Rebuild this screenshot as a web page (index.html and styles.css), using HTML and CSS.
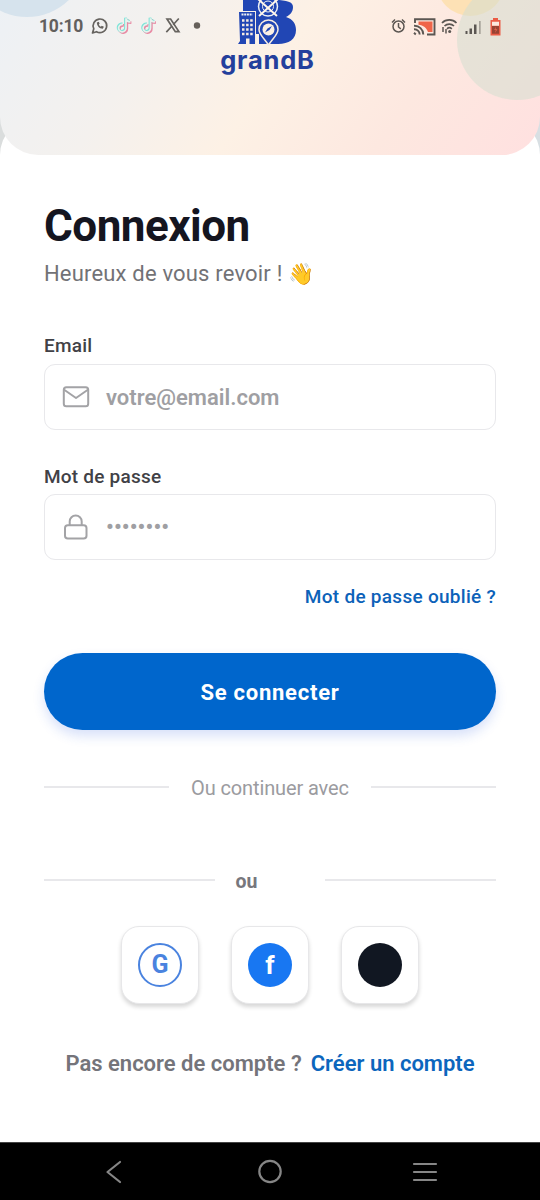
FILE: index.html
```html
<!DOCTYPE html>
<html lang="fr">
<head>
<meta charset="utf-8">
<title>Connexion</title>
<link rel="stylesheet" href="styles.css">
</head>
<body>
<div class="phone">
  <header class="hero">
    <span class="bubble bubble-blue"></span>
    <span class="bubble bubble-yellow"></span>
    <span class="bubble bubble-green"></span>
    <div class="status">
      <span class="clock">10:10</span>
      <svg class="left-icons" width="114" height="20" viewBox="0 0 114 20" fill="none">
        <g stroke="#66635f" stroke-width="1.700">
          <path d="M1.500 17l1.300-4.200A6.800 6.800 0 1 1 5.500 15.700z" stroke-linejoin="round"/>
          <path d="M5.800 6.500c.2 3.700 2.500 6.100 6 6.200l1.100-1.900-2.100-1-1 1c-1-.5-1.700-1.300-2-2.200l.8-.9-.8-2z" fill="#66635f" stroke="none"/>
        </g>
        <g id="note" stroke-width="2.600">
          <path d="M32 8.500a3.700 3.700 0 1 0 3 3.500V2.300c.3 2.200 1.700 3.400 4.500 3.600" stroke="#e98aa4" transform="translate(.9 .9)"/>
          <path d="M32 8.500a3.700 3.700 0 1 0 3 3.500V2.300c.3 2.200 1.700 3.400 4.500 3.600" stroke="#7de4d8" transform="translate(-.6 -.6)"/>
          <path d="M32 8.500a3.700 3.700 0 1 0 3 3.500V2.300c.3 2.200 1.700 3.400 4.500 3.600" stroke="#e9f1ed" stroke-width="1.700"/>
        </g>
        <use href="#note" x="24.500"/>
        <g stroke="#66635f">
          <path d="M76 3h3.600l8.300 12.600h-3.600z" stroke-width="1.700"/>
          <path d="M87.800 2.500l-5.600 6.200M81 10l-5.700 6.200" stroke-width="1.700"/>
        </g>
        <circle cx="106" cy="9.500" r="3.200" fill="#66605a"/>
      </svg>
      <svg class="right-icons" width="114" height="22" viewBox="0 0 114 22" fill="none">
        <g stroke="#5b5652" stroke-width="1.500">
          <circle cx="8.500" cy="11.500" r="5.500"/>
          <path d="M8.500 8v4l2.300 1.800M2 7.500l3-3M15 7.500l-3-3"/>
        </g>
        <path d="M28.500 6.500h14v10.500H38c-1.500-4-4.500-6.500-9.500-7.200z" fill="#ef6549"/>
        <path d="M25 8V4.200h19.500v15.300H37" stroke="#5b5652" stroke-width="1.900"/>
        <path d="M24 10.800a8.700 8.700 0 0 1 9.300 8.700M24 14.300a5.300 5.300 0 0 1 5.700 5.200M24 17.800l1.800 1.700" stroke="#5b5652" stroke-width="1.900"/>
        <g stroke="#5b5652" stroke-width="1.700">
          <path d="M52 8a10.200 10.200 0 0 1 14.500 0M54.500 11a6.700 6.700 0 0 1 9.500 0M57 13.800a3.600 3.600 0 0 1 4.800 0"/>
          <path d="M53 12v5M56 14v4.500" stroke-width="1.500"/>
          <circle cx="59.700" cy="16.500" r="1.500" fill="#5b5652" stroke="none"/>
        </g>
        <g fill="#5b5652">
          <path d="M75.500 16h2v3h-2zM79.500 13.500h2.500V19h-2.500zM84 9.500h2.500V19H84z"/>
          <path d="M89 6h1.700v13H89z" opacity=".45"/>
        </g>
        <path d="M100.500 5h2.500V3h5v2h2.500V20.500h-10z" fill="#eb5b45"/>
        <path d="M102 6.700h7v4h-7z" fill="#fbe7dd"/>
        <path d="M102 11h7v7.700h-7z" fill="#984333"/>
        <path d="M106.100 11.700l-2 3.400h1.700l-.7 3 2.300-3.900h-1.800z" fill="#e9634b"/>
      </svg>
    </div>
    <div class="brand">
      <svg width="60" height="46" viewBox="0 0 60 46" fill="none">
        <path d="M5 0h32c12 0 18 2 18 7 0 5-3 8-7 10 7 2 10 7 10 13 0 9-7 14-18 14H21V34h-3V11H5z" fill="#2146b4"/>
        <path d="M1 12h16v32H0l2-3z" fill="#2146b4"/>
        <path d="M3.500 14.500h11" stroke="#edf0f4" stroke-width="1.800" stroke-dasharray="2 .7"/>
        <path d="M4 20.500h11M4 25h11M4 29.500h11M4 34h11" stroke="#f7ece1" stroke-width="2.300" stroke-dasharray="2.500 1.600"/>
        <path d="M8 38.500h3.500V45H8z" fill="#fbf0e4"/>
        <path d="M17.500 11v32.500" stroke="#f7ece1"/>
        <circle cx="30" cy="6.500" r="9.500" stroke="#edf0f4" stroke-width="1.500"/>
        <circle cx="30" cy="6.500" r="5.500" stroke="#edf0f4"/>
        <path d="M20-1l19 17M40-1L21 16" stroke="#fff6ea" stroke-width="2"/>
        <path d="M30.500 45C26 38 21 34.500 21 29.500a9.500 9.500 0 0 1 19 0C40 34.500 35 38 30.500 45z" fill="#2146b4" stroke="#f7ece1" stroke-width="1.500"/>
        <circle cx="30.500" cy="29.500" r="6" fill="#fbf0e4"/>
        <path d="M27 32.500l2.500-4 4.500-2.500-2.500 4z" fill="#2146b4"/>
      </svg>
      <span class="brand-name">grandB</span>
    </div>
  </header>
  <main class="sheet">
    <h1>Connexion</h1>
    <p class="subtitle">Heureux de vous revoir ! <span class="wave">👋</span></p>
    <label class="label">Email</label>
    <div class="field">
      <svg width="28" height="28" viewBox="0 0 28 28" fill="none" stroke="#a3a3a6" stroke-width="2" stroke-linejoin="round" stroke-linecap="round"><rect x="1.800" y="4.300" width="24.400" height="19" rx="2.500"/><path d="M2.500 7l11.500 8 11.500-8"/></svg>
      <span class="placeholder">votre@email.com</span>
    </div>
    <label class="label label-second">Mot de passe</label>
    <div class="field">
      <svg width="28" height="28" viewBox="0 0 28 28" fill="none" stroke="#a3a3a6" stroke-width="2"><rect x="3" y="12.300" width="21.500" height="13.200" rx="2.800"/><path d="M7.700 12.300V8.500a6 6 0 0 1 12 0v3.800"/></svg>
      <span class="placeholder dots">••••••••</span>
    </div>
    <a class="forgot">Mot de passe oublié ?</a>
    <button class="submit">Se connecter</button>
    <div class="divider"><i></i><span>Ou continuer avec</span><i></i></div>
    <div class="divider or"><i></i><span>ou</span><i></i></div>
    <div class="socials">
      <div class="social"><span class="disc google">G</span></div>
      <div class="social"><span class="disc facebook">f</span></div>
      <div class="social"><span class="disc dark"></span></div>
    </div>
    <p class="signup"><span>Pas encore de compte ?</span><a>Créer un compte</a></p>
  </main>
  <nav class="navbar">
    <svg width="26" height="26" viewBox="0 0 26 26" fill="none" stroke="#868686" stroke-width="2.200" stroke-linecap="round" stroke-linejoin="round"><path d="M18 3L5.500 13 18 23"/></svg>
    <svg width="26" height="26" viewBox="0 0 26 26" fill="none" stroke="#868686" stroke-width="2.200"><circle cx="13" cy="12.500" r="10.700"/></svg>
    <svg width="26" height="26" viewBox="0 0 26 26" stroke="#868686" stroke-width="2.200" stroke-linecap="round"><path d="M2 5h22M2 13h22M2 21h22"/></svg>
  </nav>
</div>
</body>
</html>
```

FILE: styles.css
```css
* { box-sizing: border-box; }
body { margin: 0; font-family: Roboto, "Noto Sans", sans-serif; }
.phone { width: 540px; height: 1200px; display: flex; flex-direction: column; overflow: hidden; background: linear-gradient(90deg, #dadddd, #d8dfe3); }

.hero { position: relative; z-index: 1; height: 155px; flex: none; overflow: hidden; border-radius: 0 0 38px 38px; background: linear-gradient(125deg, #edf1f5 0%, #f4f1ee 28%, #fdf1e5 50%, #fde8e0 74%, #ffe0e0 100%); }
.bubble { position: absolute; border-radius: 50%; }
.bubble-blue { left: -33px; top: -103px; width: 120px; height: 120px; background: #d6e3ed; }
.bubble-yellow { left: 436px; top: -53px; width: 69px; height: 69px; background: #fde1b5; }
.bubble-green { left: 457px; top: -20px; width: 120px; height: 120px; background: rgba(211, 222, 208, .55); }
.status { position: relative; height: 51px; padding: 0 36px 0 39px; display: flex; align-items: center; }
.clock { font-size: 17.500px; font-weight: 700; color: #62605e; letter-spacing: -.2px; width: 52px; white-space: nowrap; }
.right-icons { margin: 0 0 0 auto; }
.brand { position: absolute; left: 217px; top: 0; width: 101px; display: flex; flex-direction: column; align-items: center; }
.brand-name { font: 700 25.500px/28px Inter, sans-serif; color: #243f9c; letter-spacing: .8px; }

.sheet { flex: 1; margin-top: -38px; padding: 84px 44px 0; display: flex; flex-direction: column; background: #fff; border-radius: 38px 38px 0 0; }
h1 { margin: 0; font-size: 44px; line-height: 50px; font-weight: 700; letter-spacing: -.5px; color: #15151f; }
.subtitle { margin: 8px 0 0; height: 30px; font-size: 22px; line-height: 30px; letter-spacing: .18px; color: #727276; white-space: nowrap; }
.wave { font-size: 21px; }
.label { margin-top: 45px; height: 24px; font-size: 19px; line-height: 24px; font-weight: 500; letter-spacing: .22px; color: #414146; }
.label-second { margin-top: 35px; }
.field { margin-top: 6px; height: 66px; flex: none; border: 1.500px solid #e8e8eb; border-radius: 11px; display: flex; align-items: center; gap: 16px; padding-left: 17px; }
.label-second + .field { margin-top: 5px; }
.placeholder { font-size: 22px; font-weight: 600; color: #9f9fa3; }
.dots { letter-spacing: .1px; }
.forgot { align-self: flex-end; margin-top: 24px; font-size: 19px; line-height: 26px; font-weight: 500; letter-spacing: .28px; color: #0c62b9; }
.submit { margin-top: 43px; height: 77px; flex: none; padding: 2px 0 0; border: 0; border-radius: 39px; background: #0066cc; color: #fff; font: 700 22px Roboto, sans-serif; letter-spacing: .75px; box-shadow: 0 6px 12px rgba(40, 90, 220, .18); }
.divider { margin-top: 44px; height: 28px; display: flex; align-items: center; justify-content: space-between; font-size: 20px; letter-spacing: -.12px; color: #9b9b9f; }
.divider i { width: 125px; height: 2px; margin-bottom: 2px; background: #e8e8eb; }
.or { margin-top: 65px; font-weight: 700; font-size: 19.500px; letter-spacing: 0; color: #77777d; }
.or i { width: 171px; }
.or span { width: 69px; }
.socials { margin-top: 31px; display: flex; justify-content: center; gap: 32px; }
.social { width: 78px; height: 78px; border: 1.500px solid #e7e7e9; border-radius: 18px; display: flex; align-items: center; justify-content: center; background: #fff; box-shadow: 0 3px 4px rgba(0, 0, 0, .16); }
.disc { width: 44px; height: 44px; margin-bottom: 1px; border-radius: 50%; display: flex; align-items: center; justify-content: center; font-weight: 700; font-size: 26px; }
.google { border: 2px solid #4a83df; color: #4a83df; font-size: 25px; }
.facebook { background: #1877f2; color: #fff; }
.dark { background: #111722; }
.signup { margin: 45px 0 0; display: flex; justify-content: center; gap: 9px; font-size: 22px; line-height: 30px; font-weight: 600; color: #74747a; white-space: nowrap; }
.signup a { color: #0c66bd; }
.navbar { height: 58px; flex: none; background: #000; border-top: 1px solid #444; display: flex; align-items: center; justify-content: space-between; padding: 0 102px; }
```
